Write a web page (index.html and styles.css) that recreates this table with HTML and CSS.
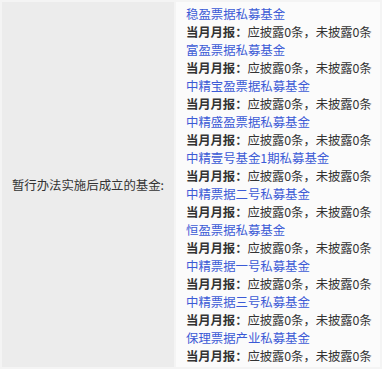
FILE: index.html
```html
<!DOCTYPE html>
<html lang="zh-CN">
<head>
<meta charset="utf-8">
<link rel="stylesheet" href="styles.css">
</head>
<body>
<table class="info">
  <tr>
    <th class="label">暂行办法实施后成立的基金:</th>
    <td class="funds">
      <a class="fund" href="#">稳盈票据私募基金</a>
      <div class="report"><b>当月月报：</b>应披露0条，未披露0条</div>
      <a class="fund" href="#">富盈票据私募基金</a>
      <div class="report"><b>当月月报：</b>应披露0条，未披露0条</div>
      <a class="fund" href="#">中精宝盈票据私募基金</a>
      <div class="report"><b>当月月报：</b>应披露0条，未披露0条</div>
      <a class="fund" href="#">中精盛盈票据私募基金</a>
      <div class="report"><b>当月月报：</b>应披露0条，未披露0条</div>
      <a class="fund" href="#">中精壹号基金1期私募基金</a>
      <div class="report"><b>当月月报：</b>应披露0条，未披露0条</div>
      <a class="fund" href="#">中精票据二号私募基金</a>
      <div class="report"><b>当月月报：</b>应披露0条，未披露0条</div>
      <a class="fund" href="#">恒盈票据私募基金</a>
      <div class="report"><b>当月月报：</b>应披露0条，未披露0条</div>
      <a class="fund" href="#">中精票据一号私募基金</a>
      <div class="report"><b>当月月报：</b>应披露0条，未披露0条</div>
      <a class="fund" href="#">中精票据三号私募基金</a>
      <div class="report"><b>当月月报：</b>应披露0条，未披露0条</div>
      <a class="fund" href="#">保理票据产业私募基金</a>
      <div class="report"><b>当月月报：</b>应披露0条，未披露0条</div>
    </td>
  </tr>
</table>
</body>
</html>
```

FILE: styles.css
```css
html, body {
  margin: 0;
  padding: 0;
  background: #ffffff;
}

body {
  font-family: "Noto Sans CJK SC", "Noto Sans", sans-serif;
  font-size: 12.4px;
  line-height: 18px;
  color: #333333;
}

.info {
  width: 382px;
  table-layout: fixed;
  border-collapse: separate;
  border-spacing: 2px;
  background: #f4f4f4;
}

.label {
  width: 172px;
  padding: 0;
  background: #ececec;
  font-weight: normal;
  text-align: center;
  vertical-align: middle;
  color: #333333;
}

.funds {
  padding: 3px 0 2px 10px;
  background: #fbfbfb;
  vertical-align: top;
}

.fund {
  display: block;
  color: #3b5ad6;
  text-decoration: none;
}

.report {
  color: #333333;
  white-space: nowrap;
  letter-spacing: -0.1px;
}

.report b {
  font-weight: bold;
}
```
